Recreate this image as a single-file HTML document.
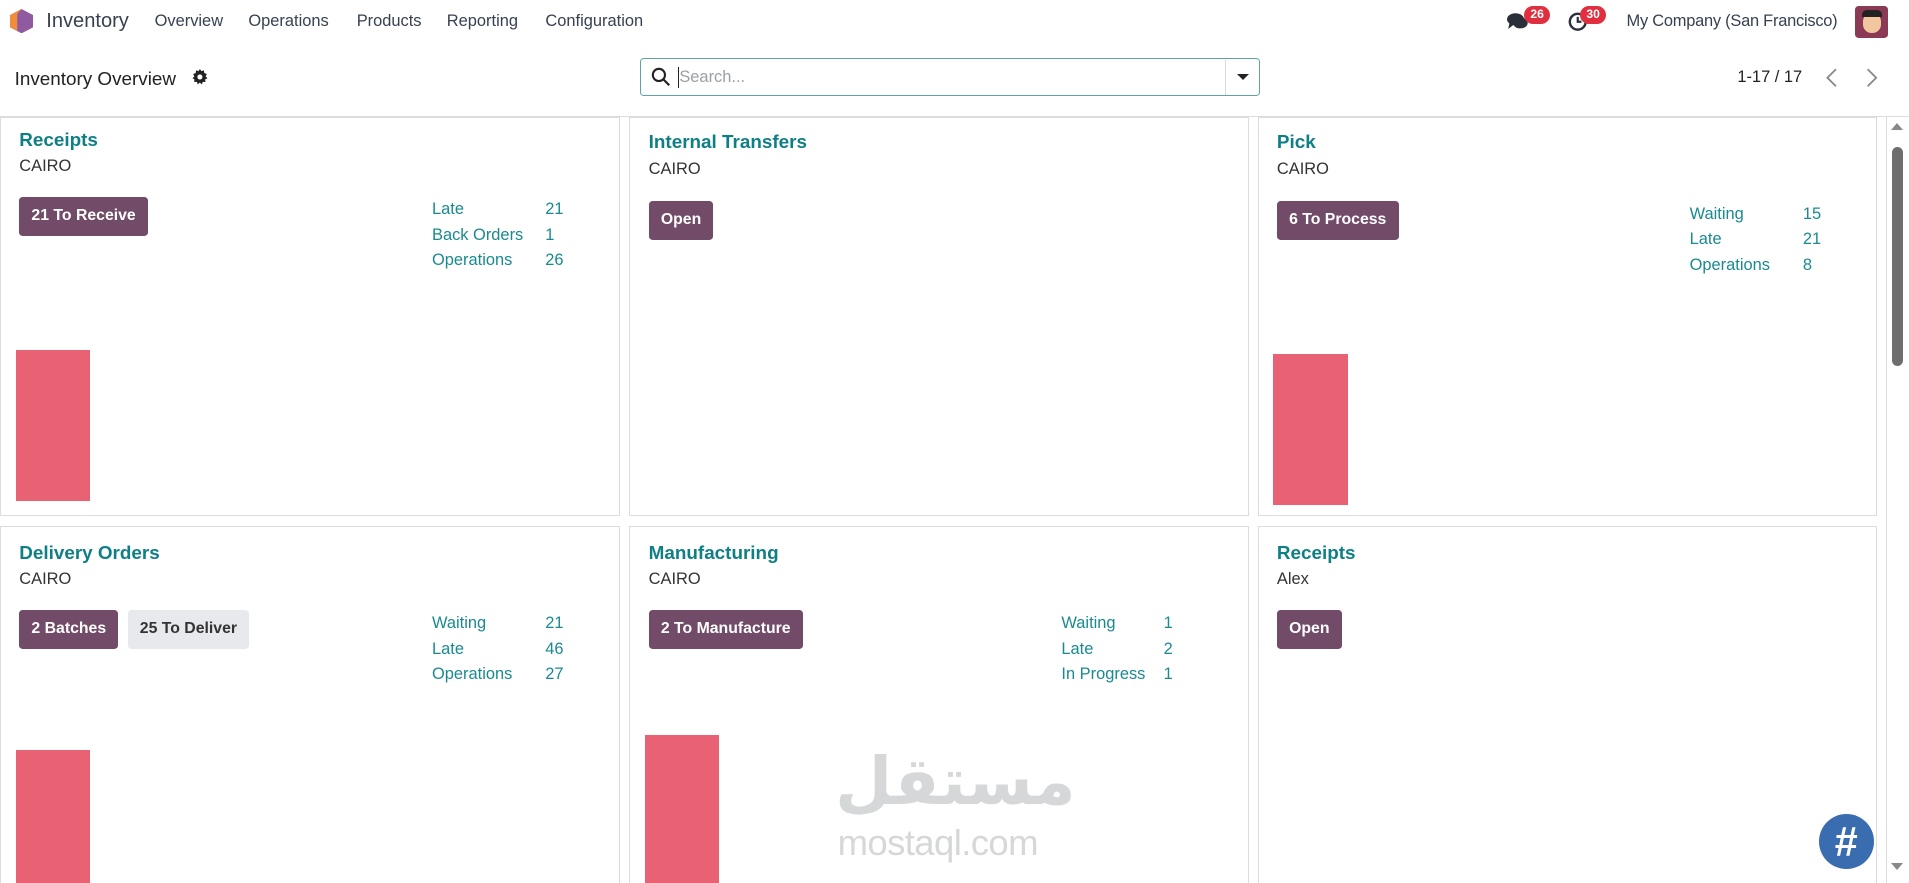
<!DOCTYPE html>
<html><head><meta charset="utf-8"><style>
html,body{margin:0;padding:0;background:#fff;overflow:hidden}
#w{position:relative;width:1568px;height:725px;zoom:1.21747;font-family:"Liberation Sans",sans-serif;color:#374151;overflow:hidden}
.a{position:absolute;white-space:nowrap}
.nav{font-size:13.5px;color:#374151;top:10px}
.card{position:absolute;border:1px solid #dcdcdc;background:#fff;box-sizing:border-box}
.t{position:absolute;left:15px;font-size:15.5px;font-weight:bold;color:#0f7f86}
.s{position:absolute;left:15px;font-size:13.5px;color:#333}
.btn{position:absolute;height:32px;line-height:32px;padding:0 10px;border-radius:3px;background:#714b67;color:#fff;font-size:13px;font-weight:bold}
.btn2{background:#e7e9ed;color:#333}
.st{position:absolute;font-size:13.5px;color:#1a8a90;line-height:21px}
.bar{position:absolute;background:#e96274}
.badge{position:absolute;background:#e0303f;color:#fff;font-size:10px;font-weight:bold;border-radius:8px;padding:1px 5px;line-height:13px}
</style></head><body><div id="w">
<svg class="a" style="left:8px;top:7px" width="19" height="20" viewBox="0 0 19 20"><polygon points="9.5,0 19,5 19,15 9.5,20 0,15 0,5" fill="#8f5aa0"/><polygon points="9.5,0 0,5 0,15 6,18 6,4" fill="#f08c3a"/></svg>
<div class="a" style="left:38px;top:8px;font-size:16.5px;color:#374151">Inventory</div>
<div class="a nav" style="left:127px">Overview</div>
<div class="a nav" style="left:204px">Operations</div>
<div class="a nav" style="left:293px">Products</div>
<div class="a nav" style="left:367px">Reporting</div>
<div class="a nav" style="left:448px">Configuration</div>
<svg class="a" style="left:1238px;top:10px" width="18" height="16" viewBox="0 0 18 16"><ellipse cx="7" cy="6" rx="7" ry="5" fill="#2b2f3a"/><ellipse cx="11" cy="9" rx="6" ry="4.5" fill="#2b2f3a"/><path d="M2 9 L1 14 L6 10Z" fill="#2b2f3a"/></svg>
<div class="badge" style="left:1252px;top:5px">26</div>
<svg class="a" style="left:1288px;top:10px" width="16" height="16" viewBox="0 0 16 16"><circle cx="8" cy="8" r="6.5" fill="none" stroke="#2b2f3a" stroke-width="2"/><path d="M8 4v4h3" stroke="#2b2f3a" stroke-width="1.8" fill="none"/></svg>
<div class="badge" style="left:1298px;top:5px">30</div>
<div class="a" style="left:1336px;top:10px;font-size:13.5px;color:#374151;letter-spacing:-0.2px">My Company (San Francisco)</div>
<div class="a" style="left:1524px;top:5px;width:27px;height:26px;border-radius:3px;background:#8a3a55"><div style="position:absolute;left:6px;top:6px;width:15px;height:16px;border-radius:7px;background:#f2c7a0"></div><div style="position:absolute;left:5px;top:3px;width:17px;height:6px;background:#222;border-radius:4px 4px 0 0"></div></div>
<div class="a" style="left:12px;top:56px;font-size:15.5px;color:#222">Inventory Overview</div>
<svg class="a" style="left:158px;top:57px" width="13" height="13" viewBox="0 0 16 16"><path d="M8 0l1.5 2.2 2.6-.8.3 2.7 2.6.9-1.2 2.4 1.9 1.9-2.4 1.2.3 2.7-2.7-.2-1 2.5-2-1.8-2 1.8-1-2.5-2.7.2.3-2.7L.5 9.4l1.9-1.9L1.2 5 3.8 4.1l.3-2.7 2.6.8Z" fill="#222"/><circle cx="8" cy="8" r="2.6" fill="#fff"/></svg>
<div class="a" style="left:526px;top:48px;width:509px;height:31px;border:1px solid #5fa3a8;border-radius:3px;box-sizing:border-box"></div>
<svg class="a" style="left:535px;top:55px" width="16" height="16" viewBox="0 0 16 16"><circle cx="6.5" cy="6.5" r="5" fill="none" stroke="#222" stroke-width="1.7"/><path d="M10.3 10.3L15 15" stroke="#222" stroke-width="1.8"/></svg>
<div class="a" style="left:557px;top:55px;width:1px;height:17px;background:#222"></div>
<div class="a" style="left:558px;top:56px;font-size:13.5px;color:#9aa0a6">Search...</div>
<div class="a" style="left:1006px;top:49px;width:1px;height:29px;background:#d8dadd"></div>
<div class="a" style="left:1016px;top:61px;width:0;height:0;border-left:5px solid transparent;border-right:5px solid transparent;border-top:5px solid #222"></div>
<div class="a" style="left:1427px;top:56px;font-size:13.5px;color:#222">1-17 / 17</div>
<svg class="a" style="left:1499px;top:56px" width="12" height="16"><path d="M9 1L2 8l7 7" stroke="#888" stroke-width="1.5" fill="none"/></svg>
<svg class="a" style="left:1531px;top:56px" width="12" height="16"><path d="M3 1l7 7-7 7" stroke="#888" stroke-width="1.5" fill="none"/></svg>
<div class="a" style="left:0;top:95px;width:1568px;height:1px;background:#dcdcdc"></div>
<div class="a" style="left:1549px;top:96px;width:1px;height:629px;background:#dcdcdc"></div>
<div class="a" style="left:1553px;top:101px;border-left:5px solid transparent;border-right:5px solid transparent;border-bottom:6px solid #888"></div>
<div class="a" style="left:1554px;top:121px;width:9px;height:180px;background:#6e6e6e;border-radius:5px"></div>
<div class="a" style="left:1553px;top:709px;border-left:5px solid transparent;border-right:5px solid transparent;border-top:6px solid #888"></div>
<div class="card" style="left:0;top:96px;width:509px;height:328px">
 <div class="t" style="top:9px">Receipts</div><div class="s" style="top:32px">CAIRO</div>
 <div class="btn" style="left:15px;top:65px">21 To Receive</div>
 <div class="st" style="left:354px;top:65px">Late<br>Back Orders<br>Operations</div>
 <div class="st" style="left:447px;top:65px">21<br>1<br>26</div>
 <div class="bar" style="left:12px;top:191px;width:61px;height:124px"></div>
</div>
<div class="card" style="left:517px;top:96px;width:509px;height:328px">
 <div class="t" style="top:11px">Internal Transfers</div><div class="s" style="top:35px">CAIRO</div>
 <div class="btn" style="left:15px;top:68px">Open</div>
</div>
<div class="card" style="left:1033px;top:96px;width:509px;height:328px">
 <div class="t" style="top:11px">Pick</div><div class="s" style="top:35px">CAIRO</div>
 <div class="btn" style="left:15px;top:68px">6 To Process</div>
 <div class="st" style="left:354px;top:69px">Waiting<br>Late<br>Operations</div>
 <div class="st" style="left:447px;top:69px">15<br>21<br>8</div>
 <div class="bar" style="left:12px;top:194px;width:61px;height:124px"></div>
</div>
<div class="card" style="left:0;top:432px;width:509px;height:320px">
 <div class="t" style="top:12px">Delivery Orders</div><div class="s" style="top:35px">CAIRO</div>
 <div class="btn" style="left:15px;top:68px">2 Batches</div>
 <div class="btn btn2" style="left:104px;top:68px">25 To Deliver</div>
 <div class="st" style="left:354px;top:69px">Waiting<br>Late<br>Operations</div>
 <div class="st" style="left:447px;top:69px">21<br>46<br>27</div>
 <div class="bar" style="left:12px;top:183px;width:61px;height:130px"></div>
</div>
<div class="card" style="left:517px;top:432px;width:509px;height:320px">
 <div class="t" style="top:12px">Manufacturing</div><div class="s" style="top:35px">CAIRO</div>
 <div class="btn" style="left:15px;top:68px">2 To Manufacture</div>
 <div class="st" style="left:354px;top:69px">Waiting<br>Late<br>In Progress</div>
 <div class="st" style="left:438px;top:69px">1<br>2<br>1</div>
 <div class="bar" style="left:12px;top:171px;width:61px;height:140px"></div>
</div>
<div class="card" style="left:1033px;top:432px;width:509px;height:320px">
 <div class="t" style="top:12px">Receipts</div><div class="s" style="top:35px">Alex</div>
 <div class="btn" style="left:15px;top:68px">Open</div>
</div>
<div class="a" style="left:686px;top:610px;font-family:'DejaVu Sans',sans-serif;font-size:54px;font-weight:bold;color:#d6d7d9;line-height:64px">مستقل</div>
<div class="a" style="left:688px;top:675px;font-size:30px;color:#d6d7d9;letter-spacing:-0.5px">mostaql.com</div>
<div class="a" style="left:1494px;top:669px;width:45px;height:45px;border-radius:50%;background:#3a6db0;color:#fff;font-size:34px;font-weight:bold;text-align:center;line-height:46px">#</div>
</div></body></html>
